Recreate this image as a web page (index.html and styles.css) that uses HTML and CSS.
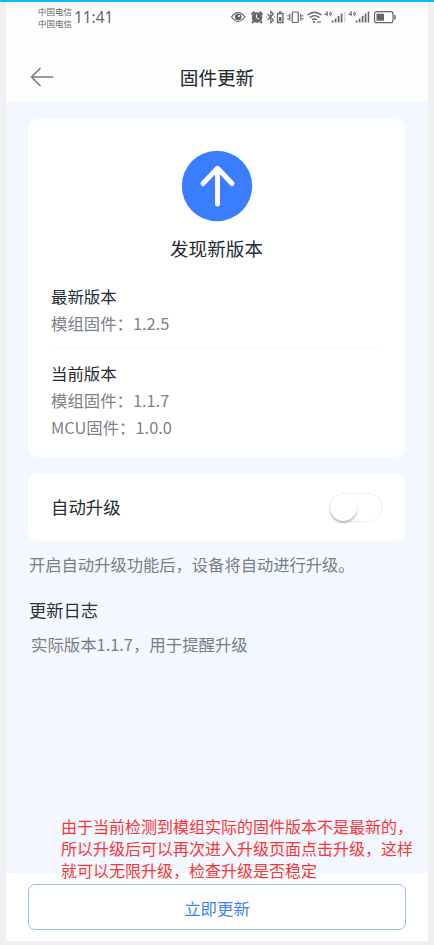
FILE: index.html
```html
<!DOCTYPE html>
<html lang="zh-CN">
<head>
<meta charset="utf-8">
<title>固件更新</title>
<link rel="stylesheet" href="styles.css">
</head>
<body>
<div class="phone">
  <header class="header">
    <div class="status">
      <div class="carriers"><span>中国电信</span><span>中国电信</span></div>
      <time class="clock">11:41</time>
      <svg class="status-icons" width="168" height="16" viewBox="0 0 168 16" fill="none" stroke="#666" stroke-width="1.2">
        <!-- eye -->
        <path d="M1.500 8Q8 -.8 15 8Q8 16.800 1.500 8Z"/>
        <circle cx="8.200" cy="8" r="3.300" fill="#666" stroke="none"/><circle cx="9" cy="7" r="1" fill="#fff" stroke="none"/>
        <!-- alarm -->
        <circle cx="27" cy="8.500" r="5.200" fill="#666" stroke="none"/>
        <path d="M21.500 5.500l3-2.700M32.500 5.500l-3-2.700M23.500 12.500l-1.500 1.500M30.500 12.500l1.500 1.500" stroke-width="2"/>
        <path d="M26.500 5.500v3.300l2.500 1.700" stroke="#fff" stroke-width="1"/>
        <!-- bluetooth with battery -->
        <path d="M37.500 5l6 6-2.700 2.800V2.300L43.500 5l-6 6" stroke-width="1.100"/>
        <path d="M36.300 8h1M44 8h1" stroke-width="1"/>
        <path d="M47.500 4.500h5.500v9h-5.500zM49 2.800h2.500" stroke-width="1.300"/><path d="M49 8h2.500v4H49z" fill="#666" stroke="none"/>
        <!-- vibrate -->
        <rect x="62.300" y="3" width="6" height="10.500" rx=".8"/><path d="M59.800 4.800v7M70.800 4.800v7M58 6v1.500M58 9v1.500M72.700 6v1.500M72.700 9v1.500" stroke-width="1.200"/>
        <!-- wifi -->
        <path d="M77.500 6Q84.500 .4 91.500 6M79.700 8.600Q84.500 4.700 89.300 8.600M82 11Q84.500 9 87 11" stroke-width="1.400"/><circle cx="84" cy="13" r="1.100" fill="#666" stroke="none"/><path d="M87 13h4" stroke-width="1.200"/>
        <!-- signal strength -->
        <g id="signal"><path d="M97 2.500l-2 3h3M97.300 2.500v4.500M101.500 3.500q-2-1.500-2 1.200t2 1.300v-1.300h-1" stroke-width=".9"/><path d="M102.600 13.500v-2M105.600 13.500v-4M108.600 13.500v-6.500M111.600 13.500v-9" stroke-width="1.700"/></g>
        <path d="M114.600 13.500v-11" stroke="#d6d6d6" stroke-width="1.200"/>
        <use href="#signal" x="24"/><path d="M138.500 13.500v-11" stroke-width="1.500"/>
        <!-- battery -->
        <rect x="144.500" y="2.700" width="18.500" height="11" rx="2.500"/><rect x="146.500" y="4.700" width="7.500" height="7" fill="#666" stroke="none"/><path d="M165 6v4.500" stroke-width="1.500"/>
      </svg>
    </div>
    <nav class="navbar">
      <svg class="back" width="24" height="20" viewBox="0 0 24 20" fill="none" stroke="#747c84" stroke-width="1.600" stroke-linecap="round" stroke-linejoin="round"><path d="M22.800 10H1.500M10 1.500L1.500 10l8.500 8.500"/></svg>
      <h1>固件更新</h1>
    </nav>
  </header>
  <main class="content">
    <section class="card release">
      <svg class="up" width="72" height="72" viewBox="0 0 72 72"><circle cx="36" cy="36" r="35.200" fill="#3a7dff"/><path d="M36.500 54V18.500M22 33.500l14.500-15.200L51 33.500" fill="none" stroke="#fff" stroke-width="5" stroke-linecap="round" stroke-linejoin="round"/></svg>
      <h2>发现新版本</h2>
      <div class="version">
        <h3>最新版本</h3>
        <p>模组固件：<span>1.2.5</span></p>
      </div>
      <div class="version current">
        <h3>当前版本</h3>
        <p>模组固件：<span>1.1.7</span></p>
        <p>MCU固件：<span>1.0.0</span></p>
      </div>
    </section>
    <section class="card auto">
      <span>自动升级</span>
      <span class="switch"><i></i></span>
    </section>
    <p class="hint">开启自动升级功能后，设备将自动进行升级。</p>
    <h2 class="log-title">更新日志</h2>
    <p class="log">实际版本1.1.7，用于提醒升级</p>
  </main>
  <footer class="footer"><button>立即更新</button></footer>
  <p class="annotation">由于当前检测到模组实际的固件版本不是最新的，<br>所以升级后可以再次进入升级页面点击升级，这样<br>就可以无限升级，检查升级是否稳定</p>
</div>
</body>
</html>
```
FILE: styles.css
```css
* { box-sizing: border-box; }
body {
  margin: 0;
  height: 945px;
  padding: 0 6px 4px;
  border-top: 2px solid #12b7f5;
  background: #f0f0f0;
  font-family: "Noto Sans CJK SC", sans-serif;
  overflow: hidden;
}
h1, h2, h3, p { margin: 0; font-weight: 400; }
.phone {
  position: relative;
  width: 422px;
  height: 939px;
  display: flex;
  flex-direction: column;
  background: #f3f7ff;
}
.header { height: 100px; background: #fefefe; }
.status { display: flex; height: 32px; padding: 3px 0 0 32px; color: #666; }
.carriers { display: flex; flex-direction: column; width: 36px; font-size: 8.5px; line-height: 12px; white-space: nowrap; }
.clock { width: 156px; font-family: "Noto Sans", sans-serif; font-size: 15.4px; line-height: 25px; }
.status-icons { margin-top: 4px; }
.navbar { display: flex; align-items: center; height: 68px; padding: 18px 0 0 24px; }
h1 { width: 326px; text-align: center; font-size: 18.6px; line-height: 28px; color: #252d34; -webkit-text-stroke: .1px #252d34; }
.content { flex: 1; padding: 17px 23px 0 22px; }
.card { border-radius: 9px; background: #fff; }
.release { display: flex; flex-direction: column; height: 338px; padding: 31px 23px 0; }
.up { align-self: center; }
.release h2 { margin-top: 12px; text-align: center; font-size: 18.6px; line-height: 28px; color: #252d34; }
.version { padding-top: 21px; }
.version h3, .version p { font-size: 16.4px; line-height: 27px; }
.version h3 { color: #252d34; }
.version p { color: #7c838b; }
.current { margin-top: 11px; padding-top: 11px; border-top: 1px solid #f6f7f8; }
.auto { display: flex; align-items: center; justify-content: space-between; height: 68px; margin-top: 16px; padding: 0 22px 0 23px; font-size: 17.4px; line-height: 26px; color: #252d34; }
.switch { width: 54px; height: 29px; border: 1px solid #ededef; border-radius: 15px; }
.switch i { display: block; width: 27px; height: 27px; border-radius: 50%; background: #fff; box-shadow: 0 2px 2px #bbb; }
.hint { margin: 10px 0 0 1px; font-size: 16.3px; line-height: 27px; color: #777e87; white-space: nowrap; }
.log-title { margin: 18px 0 0 1px; font-size: 17.3px; line-height: 28px; color: #2c323c; }
.log { margin: 7px 0 0 3px; font-size: 16.4px; line-height: 27px; color: #777e87; white-space: nowrap; }
.footer { height: 68px; padding: 11px 22px; background: #fff; }
button { display: block; width: 378px; height: 46px; padding: 1px 0 0; border: 1.500px solid #9abcff; border-radius: 7px; background: #fff; color: #3f7ffa; font-family: inherit; font-size: 16.4px; line-height: 24px; }
.annotation { position: absolute; left: 55px; top: 813px; font-size: 16px; line-height: 22px; color: #fa3434; white-space: nowrap; }
```
